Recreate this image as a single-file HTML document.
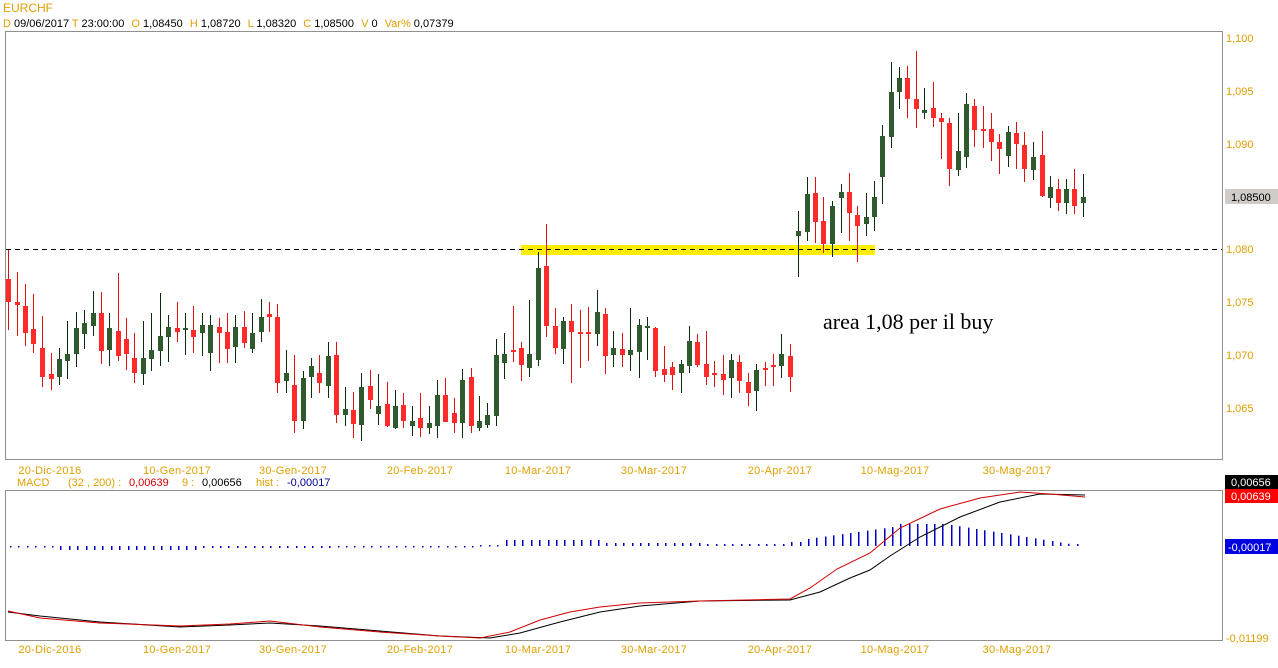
<!DOCTYPE html>
<html><head><meta charset="utf-8"><style>
html,body{margin:0;padding:0;background:#fff;width:1278px;height:668px;overflow:hidden}
svg{display:block}
text{font-family:"Liberation Sans",Arial,sans-serif;font-size:11px}
</style></head><body>
<svg id="s" width="1278" height="668" xmlns="http://www.w3.org/2000/svg">
<rect width="1278" height="668" fill="#fff"/>
<text x="3" y="12" fill="#e0a000" style="font-size:12px">EURCHF</text>
<text x="3" y="27" fill="#000"><tspan fill="#e0a000">D</tspan> 09/06/2017 <tspan fill="#e0a000">T</tspan> 23:00:00 <tspan fill="#e0a000" dx="4">O</tspan> 1,08450 <tspan fill="#e0a000" dx="4">H</tspan> 1,08720 <tspan fill="#e0a000" dx="4">L</tspan> 1,08320 <tspan fill="#e0a000" dx="4">C</tspan> 1,08500 <tspan fill="#e0a000" dx="4">V</tspan> 0 <tspan fill="#e0a000" dx="4">Var%</tspan> 0,07379</text>
<rect x="5.5" y="31.5" width="1217" height="428" fill="none" stroke="#909090"/>
<rect x="5.5" y="490.5" width="1217" height="150" fill="none" stroke="#909090"/>
<rect x="521" y="245" width="354" height="10" fill="#ffee00"/>
<line x1="6" y1="249.5" x2="1222" y2="249.5" stroke="#000" stroke-dasharray="5,4"/>
<text x="823" y="329" fill="#000" style="font-family:'Liberation Serif',serif;font-size:22px">area 1,08 per il buy</text>
<g id="c"></g>
<g fill="#e0a000">
<text x="1226" y="42">1,100</text><text x="1226" y="95">1,095</text><text x="1226" y="148">1,090</text>
<text x="1226" y="253">1,080</text><text x="1226" y="306">1,075</text><text x="1226" y="359">1,070</text><text x="1226" y="412">1,065</text>
<text x="1226" y="642">-0,01199</text>
</g>
<rect x="1225" y="189" width="53" height="15" fill="#d0ccc8"/><text x="1231" y="201" fill="#000">1,08500</text>
<rect x="1225" y="475" width="53" height="14" fill="#000"/><text x="1231" y="486" fill="#fff">0,00656</text>
<rect x="1225" y="489" width="53" height="14" fill="#f00"/><text x="1231" y="500" fill="#fff">0,00639</text>
<rect x="1225" y="539" width="53" height="15" fill="#0000e0"/><text x="1228" y="551" fill="#fff">-0,00017</text>
<g fill="#e0a000" text-anchor="middle" style="letter-spacing:0.3px">
<text x="50" y="474">20-Dic-2016</text><text x="177" y="474">10-Gen-2017</text><text x="293" y="474">30-Gen-2017</text><text x="420" y="474">20-Feb-2017</text><text x="538" y="474">10-Mar-2017</text><text x="654" y="474">30-Mar-2017</text><text x="780" y="474">20-Apr-2017</text><text x="895" y="474">10-Mag-2017</text><text x="1017" y="474">30-Mag-2017</text>
<text x="50" y="653">20-Dic-2016</text><text x="177" y="653">10-Gen-2017</text><text x="293" y="653">30-Gen-2017</text><text x="420" y="653">20-Feb-2017</text><text x="538" y="653">10-Mar-2017</text><text x="654" y="653">30-Mar-2017</text><text x="780" y="653">20-Apr-2017</text><text x="895" y="653">10-Mag-2017</text><text x="1017" y="653">30-Mag-2017</text>
</g>
<text x="17" y="486" fill="#e0a000">MACD</text>
<text x="68" y="486" fill="#e0a000">(32 , 200) :</text>
<text x="129" y="486" fill="#d00000">0,00639</text>
<text x="182" y="486" fill="#e0a000">9 :</text>
<text x="202" y="486" fill="#000">0,00656</text>
<text x="256" y="486" fill="#e0a000">hist :</text>
<text x="287" y="486" fill="#000090">-0,00017</text>
<g id="h"></g>
<polyline fill="none" stroke="#000" stroke-width="1" points="8,612 40,616 100,622 180,627 230,625 270,623 320,626 380,631 440,636 490,638 520,633 560,622 600,612 640,606 700,601 790,600 820,592 850,578 870,570 890,556 920,537 960,517 1000,502 1040,494 1085,495"/>
<polyline fill="none" stroke="#d00000" stroke-width="1" points="8,611 40,618 100,623 180,626 230,624 270,621 320,627 380,632 440,636 480,638 510,632 540,620 570,612 600,607 640,603 700,601 790,599 810,588 837,569 870,553 900,528 940,509 980,498 1020,492 1050,494 1085,497"/>
</svg>
<script>
var C=[
[8,279,302,250,330,0],[17,302,305,272,336,0],[25,306,333,284,346,0],[33,329,344,294,353,0],[42,348,377,316,387,0],[51,374,379,353,390,0],[59,377,359,348,385,1],[67,361,354,321,379,1],[76,354,328,312,367,1],[84,334,323,310,349,1],[93,326,313,291,336,1],[101,313,351,292,364,0],[109,350,328,313,366,1],[118,331,356,273,361,0],[126,339,354,318,370,0],[134,358,373,333,383,0],[143,374,358,321,385,1],[151,359,350,313,371,1],[160,351,336,293,366,1],[168,337,327,315,362,1],[177,328,332,302,342,0],[185,330,328,313,355,1],[193,330,337,306,353,0],
[202,333,325,313,356,1],[210,353,325,315,371,1],[219,327,333,318,363,0],[227,332,349,313,363,0],[235,347,327,315,363,1],[244,327,343,311,348,0],[252,349,333,313,353,1],[261,332,317,299,342,1],[269,314,317,302,332,0],[277,317,383,304,393,0],[286,381,373,350,393,1],[294,385,421,355,433,0],[303,421,378,371,429,1],[311,377,366,358,398,1],[319,373,383,355,393,0],[328,386,356,342,398,1],[336,355,415,342,423,0],[345,415,409,387,426,1],[353,410,424,392,438,0],[361,425,387,373,441,1],[370,386,400,370,409,0],[378,414,406,374,425,1],[387,404,426,382,427,0],[395,428,406,390,429,1],[403,405,421,393,428,0],[412,426,421,406,436,1],[420,418,428,393,437,0],[429,428,423,406,434,1],[437,426,395,380,438,1],[445,395,422,378,422,0],[454,413,423,398,433,0],[462,423,380,369,438,1],[471,377,426,368,433,0],[479,428,421,396,431,1],[487,425,415,403,428,1],[496,416,355,339,426,1],[504,363,354,333,379,1],[513,350,351,306,362,0],[521,348,365,342,381,0],[529,368,354,300,377,1],
[538,360,268,252,366,1],[546,266,326,224,337,0],[555,326,348,308,354,0],[563,349,321,317,364,1],[571,321,332,304,383,0],[580,332,334,310,368,0],[588,332,334,307,361,0],[597,334,312,290,346,1],[605,314,356,308,374,0],[613,355,348,331,367,1],[622,349,355,333,367,0],[630,355,350,308,371,1],[639,352,325,319,378,1],[647,328,326,317,360,1],[655,328,371,327,377,0],[664,369,375,346,382,0],[672,367,375,362,390,0],[681,373,364,360,393,1],[689,366,341,326,373,1],[697,342,365,334,367,0],[706,364,377,331,385,0],[714,373,375,361,387,0],[723,374,380,355,395,0],[731,378,360,354,398,1],[739,362,381,355,393,0],[748,382,393,373,406,0],[756,391,370,364,411,1],[765,368,369,362,386,0],[773,365,367,354,386,0],[781,366,354,334,378,1],[790,356,377,344,392,0],
[798,236,231,211,277,1],[807,232,194,177,241,1],[815,193,222,177,243,0],[823,221,244,197,253,0],[832,244,206,201,257,1],[841,198,192,184,233,1],[849,192,213,173,241,0],[857,215,226,206,262,0],[866,224,217,193,236,1],[874,217,197,181,231,1],[882,177,136,125,204,1],[891,137,92,62,148,1],[899,92,78,67,109,1],[907,78,99,66,118,0],[916,99,109,51,128,0],[924,113,110,88,119,1],[933,108,118,82,127,0],[941,118,122,113,159,0],[949,123,169,118,186,0],[958,170,151,113,176,1],[966,157,104,93,168,1],[974,106,130,99,147,0],[983,129,131,106,148,0],[991,129,142,113,161,0],[999,142,149,134,174,0],[1008,156,132,126,167,1],[1016,133,144,122,169,0],[1024,145,169,132,182,0],[1033,170,157,142,180,1],[1042,155,196,131,197,0],[1050,198,187,176,208,1],[1058,189,203,179,211,0],[1066,203,189,179,214,1],[1074,189,206,169,214,0],[1083,203,197,174,217,1]];
var s='';
C.forEach(function(c){var x=c[0],t=Math.min(c[1],c[2]),b=Math.max(c[1],c[2]);if(b-t<2){b=t+2}
var g=c[5];var wc=g?'#0a2e0a':'#e01010',bc=g?'#2e5a2e':'#ff2a2a';
s+='<rect x="'+x+'" y="'+c[3]+'" width="1" height="'+(c[4]-c[3])+'" fill="'+wc+'"/>';
s+='<rect x="'+(x-2)+'" y="'+t+'" width="5" height="'+(b-t)+'" fill="'+bc+'"/>';});
document.getElementById('c').innerHTML=s;
var h='';
for(var x=10;x<=1085;x+=8.4){var v;
if(x<60)v=-1;else if(x<200)v=-4;else if(x<330)v=-2;else if(x<480)v=-1;else if(x<500)v=1;else if(x<600)v=6;else if(x<700)v=3;else if(x<790)v=2;
else if(x<800)v=4;else if(x<900)v=6+(x-800)*0.14;else if(x<945)v=22;else v=Math.max(2,22-(x-945)*0.16);
var y0=546;h+='<rect x="'+Math.round(x)+'" y="'+(v>0?y0-v:y0)+'" width="1.5" height="'+Math.max(1.5,Math.abs(v))+'" fill="#0000c0"/>';}
document.getElementById('h').innerHTML=h;
</script>
</body></html>
